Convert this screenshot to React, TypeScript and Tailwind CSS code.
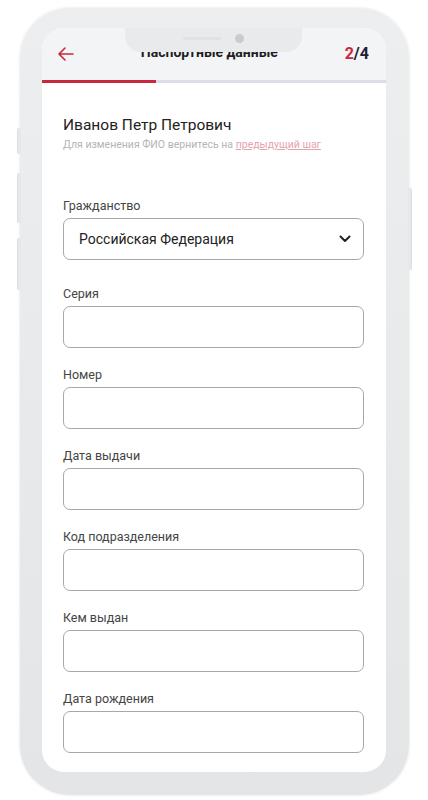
import React from "react";

const fields = [
  "Серия",
  "Номер",
  "Дата выдачи",
  "Код подразделения",
  "Кем выдан",
  "Дата рождения",
];

export default function App() {
  return (
    <div
      className="w-[428px] h-[800px] bg-white overflow-hidden"
      style={{ fontFamily: "Roboto, 'Noto Sans', sans-serif" }}
    >
      <div className="relative ml-[20px] mt-[8px] w-[389px] h-[787px] rounded-[50px] bg-gradient-to-b from-[#eceef0] to-[#e3e5e7] pt-[20px] pl-[22px] pr-[23px] pb-[23px] shadow-[0_0_3px_rgba(0,0,0,0.12)]">
        {/* side buttons */}
        <div className="absolute left-[-3px] top-[120px] w-[4px] h-[26px] rounded-l-[2px] bg-[#e6e8ea] border-l border-[#dcdee0]" />
        <div className="absolute left-[-3px] top-[165px] w-[4px] h-[50px] rounded-l-[2px] bg-[#e6e8ea] border-l border-[#dcdee0]" />
        <div className="absolute left-[-3px] top-[230px] w-[4px] h-[52px] rounded-l-[2px] bg-[#e6e8ea] border-l border-[#dcdee0]" />
        <div className="absolute right-[-3px] top-[180px] w-[4px] h-[82px] rounded-r-[2px] bg-[#e6e8ea] border-r border-[#dcdee0]" />

        <div className="relative h-full rounded-[22px] bg-white overflow-hidden flex flex-col">
          {/* header */}
          <div className="h-[52px] bg-[#f3f4f6] flex items-center justify-between pl-[16px] pr-[17px] shrink-0">
            <svg width="16" height="14" viewBox="0 0 16 14" fill="none">
              <path
                d="M15 7H1.5M7 1L1 7l6 6"
                stroke="#c8283c"
                strokeWidth="1.6"
                strokeLinecap="round"
                strokeLinejoin="round"
              />
            </svg>
            <div className="text-[14px] font-bold text-[#1e1e24] leading-[20px] mt-[-4px]">
              Паспортные данные
            </div>
            <div className="text-[16px] font-bold leading-[20px]">
              <span className="text-[#c8283c]">2</span>
              <span className="text-[#1e2030]">/4</span>
            </div>
          </div>
          {/* notch */}
          <div className="absolute top-0 left-[83px] w-[177px] h-[24px] bg-[#e8eaec] rounded-b-[16px] flex items-center justify-center">
            <div className="w-[38px] h-[3px] rounded-full bg-[#e0e2e4] mr-[14px] mt-[-4px]" />
            <div className="w-[9px] h-[9px] rounded-full bg-[#c9cbce] mt-[-4px]" />
          </div>
          {/* progress */}
          <div className="flex h-[3px] shrink-0">
            <div className="w-[114px] bg-[#c8283c]" />
            <div className="flex-1 bg-[#dcdde8]" />
          </div>
          {/* content */}
          <div className="flex-1 pl-[21px] pr-[22px] pt-[32px]">
            <div className="text-[15.5px] leading-[20px] text-[#222]">
              Иванов Петр Петрович
            </div>
            <div className="mt-[3px] text-[10.5px] leading-[14px] text-[#b4b4b4]">
              Для изменения ФИО вернитесь на{" "}
              <span className="text-[#e3a3ae] underline">предыдущий шаг</span>
            </div>

            <div className="mt-[46px]">
              <div className="text-[12.5px] leading-[16px] text-[#444] mb-[4px]">
                Гражданство
              </div>
              <div className="h-[42px] rounded-[7px] border border-[#a8a8a8] flex items-center justify-between pl-[15px] pr-[12px]">
                <span className="text-[14px] text-[#222]">
                  Российская Федерация
                </span>
                <svg width="12" height="8" viewBox="0 0 12 8" fill="none">
                  <path
                    d="M1.5 1.5L6 6l4.5-4.5"
                    stroke="#222"
                    strokeWidth="2"
                    strokeLinecap="round"
                    strokeLinejoin="round"
                  />
                </svg>
              </div>
            </div>

            {fields.map((f, i) => (
              <div key={f} className={i === 0 ? "mt-[26px]" : "mt-[19px]"}>
                <div className="text-[12.5px] leading-[16px] text-[#444] mb-[4px]">
                  {f}
                </div>
                <div className="h-[42px] rounded-[7px] border border-[#a8a8a8] bg-white" />
              </div>
            ))}
          </div>
        </div>
      </div>
    </div>
  );
}
